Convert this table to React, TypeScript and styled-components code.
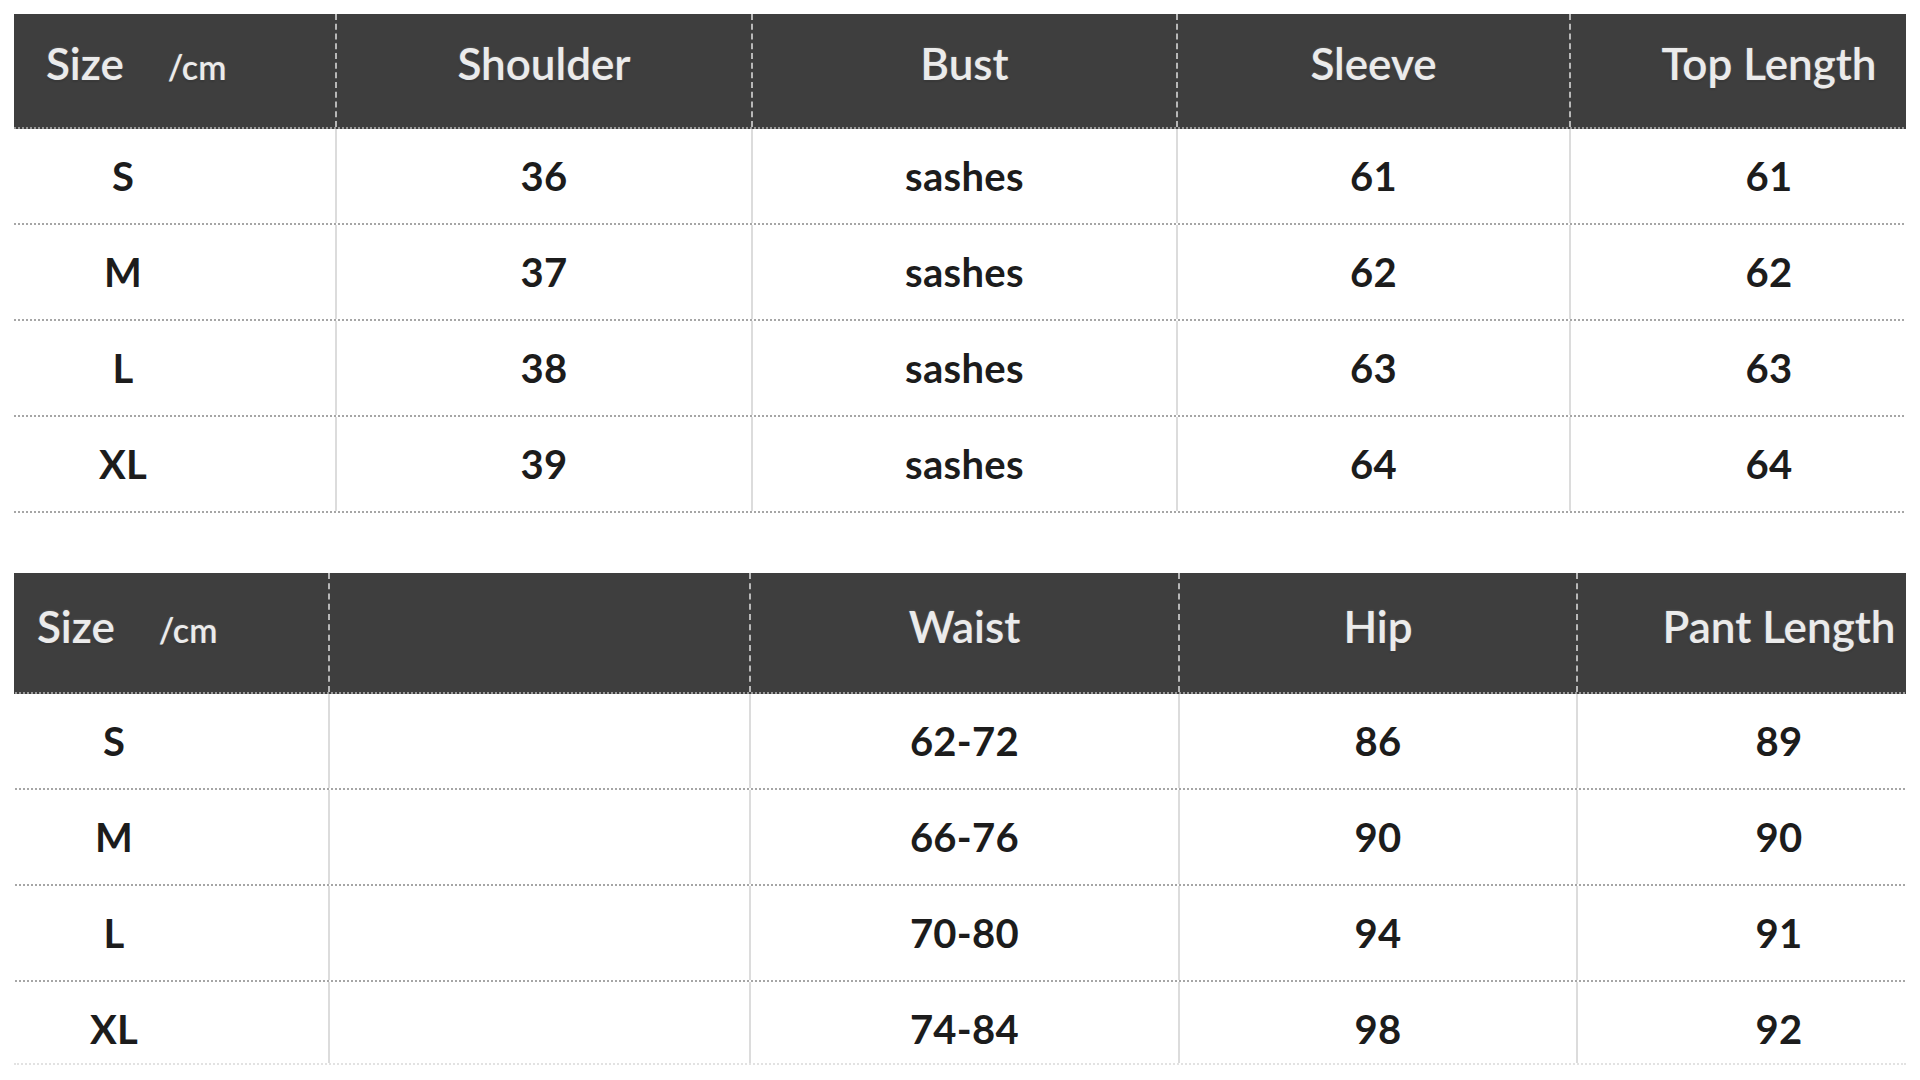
import React from 'react'
import styled, { createGlobalStyle } from 'styled-components'

const GlobalStyle = createGlobalStyle`
    *, *::before, *::after {
        box-sizing: border-box;
    }
    html, body {
        margin: 0;
        padding: 0;
        background: #ffffff;
    }
    body {
        width: 1920px;
        height: 1080px;
        overflow: hidden;
        font-family: "Lato", "Open Sans", sans-serif;
    }
`

const Page = styled.div`
    display: flex;
    flex-direction: column;
    gap: 60px;
    padding: 14px 0 0 14px;
    width: 1906px;
`

// the screenshot is a crop of a wider chart, so the grid runs past both edges
const Clip = styled.div<{ $height?: number }>`
    width: 1892px;
    overflow: hidden;
    height: ${p => p.$height ? `${p.$height}px` : 'auto'};
    border-bottom: ${p => p.$height ? '2px dotted #e2e2e2' : 'none'};
`

const Table = styled.div<{ $shift: number }>`
    display: flex;
    flex-direction: column;
    margin-left: -${p => p.$shift}px;
    width: max-content;
`

const HeadRow = styled.div<{ $cols: string; $height: number }>`
    display: grid;
    grid-template-columns: ${p => p.$cols};
    height: ${p => p.$height}px;
    flex-shrink: 0;
    background: #3e3e3e;
    border-bottom: 2px dotted #9a9a9a;
`

const HeadCell = styled.div<{ $top: number; $left?: number }>`
    display: flex;
    align-items: baseline;
    justify-content: ${p => p.$left ? 'flex-start' : 'center'};
    padding-top: ${p => p.$top}px;
    padding-left: ${p => p.$left || 0}px;
    border-right: 2px dashed #b8b8b8;
    color: #ebebeb;
    font-size: 44px;
    font-weight: 600;
    line-height: 1;
    white-space: nowrap;
    text-shadow: 0 0 2px rgba(255, 255, 255, 0.35), 0 1px 2px rgba(0, 0, 0, 0.5);

    &:last-child {
        border-right: none;
    }
`

const Unit = styled.span`
    margin-left: 44px;
    font-size: 34px;
`

const BodyRow = styled.div<{ $cols: string; $height: number }>`
    display: grid;
    grid-template-columns: ${p => p.$cols};
    height: ${p => p.$height}px;
    flex-shrink: 0;
    border-bottom: 2px dotted #a6a6a6;
`

const Cell = styled.div`
    display: flex;
    align-items: center;
    justify-content: center;
    border-right: 2px solid #dcdcdc;
    color: #1c1c1c;
    font-size: 40px;
    font-weight: 700;
    letter-spacing: 0.3px;
    white-space: nowrap;

    &:last-child {
        border-right: none;
    }
`

const topChart = {
    cols: '426px 416px 425px 393px 396px',
    shift: 103,
    head: 115,
    row: 96,
    top: 27,
    left: 135,
    titles: ['Shoulder', 'Bust', 'Sleeve', 'Top Length'],
    rows: [
        ['S', '36', 'sashes', '61', '61'],
        ['M', '37', 'sashes', '62', '62'],
        ['L', '38', 'sashes', '63', '63'],
        ['XL', '39', 'sashes', '64', '64'],
    ],
}

const pantChart = {
    cols: '430px 421px 429px 398px 402px',
    shift: 114,
    head: 121,
    row: 96,
    top: 31,
    left: 137,
    titles: ['', 'Waist', 'Hip', 'Pant Length'],
    rows: [
        ['S', '', '62-72', '86', '89'],
        ['M', '', '66-76', '90', '90'],
        ['L', '', '70-80', '94', '91'],
        ['XL', '', '74-84', '98', '92'],
    ],
}

type Chart = typeof topChart

const SizeChart = ({ chart, height }: { chart: Chart; height?: number }) => (
    <Clip $height={ height }>
        <Table $shift={ chart.shift }>
            <HeadRow $cols={ chart.cols } $height={ chart.head }>
                <HeadCell $top={ chart.top } $left={ chart.left }>
                    Size<Unit>/cm</Unit>
                </HeadCell>
                {
                    chart.titles.map((title, i) => (
                        <HeadCell key={ i } $top={ chart.top }>{ title }</HeadCell>
                    ))
                }
            </HeadRow>
            {
                chart.rows.map(row => (
                    <BodyRow key={ row[0] } $cols={ chart.cols } $height={ chart.row }>
                        { row.map((value, i) => <Cell key={ i }>{ value }</Cell>) }
                    </BodyRow>
                ))
            }
        </Table>
    </Clip>
)

export default function App() {
    return (
        <>
            <GlobalStyle />
            <Page>
                <SizeChart chart={ topChart } />
                <SizeChart chart={ pantChart } height={ 492 } />
            </Page>
        </>
    )
}
